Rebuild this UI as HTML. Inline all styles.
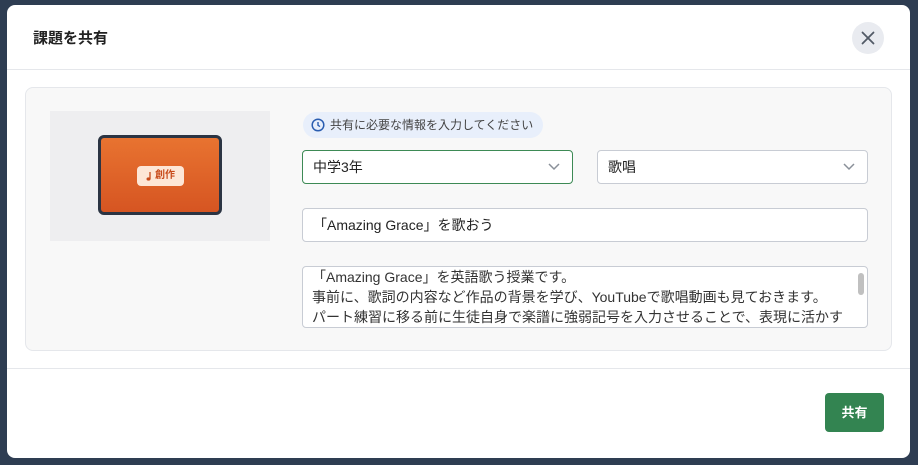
<!DOCTYPE html>
<html><head><meta charset="utf-8"><style>
*{box-sizing:border-box;margin:0;padding:0}
body{width:918px;height:465px;background:#2e3d52;font-family:"Liberation Sans","Noto Sans CJK JP",sans-serif;position:relative;overflow:hidden;color:#222}
.modal{position:absolute;left:7px;top:5px;width:903px;height:453px;background:#fff;border-radius:8px}
.title{position:absolute;left:26px;top:22px;font-size:15px;font-weight:bold;color:#222}
.close{position:absolute;left:845px;top:17px;width:32px;height:32px;border-radius:50%;background:#e9ebf0}
.hr1{position:absolute;left:0;right:0;top:64px;border-top:1px solid #e5e7eb}
.hr2{position:absolute;left:0;right:0;top:363px;border-top:1px solid #e5e7eb}
.panel{position:absolute;left:18px;top:82px;width:867px;height:264px;background:#f8f8f8;border:1px solid #e5e7eb;border-radius:8px}
.thumb{position:absolute;left:24px;top:23px;width:220px;height:130px;background:#eeeef0}
.card{position:absolute;left:48px;top:24px;width:124px;height:80px;border:3px solid #2b3443;border-radius:6px;background:linear-gradient(#e87330,#d65522)}
.tag{position:absolute;left:36px;top:28px;width:47px;height:20px;background:#fde6d6;border-radius:4px;color:#c84a1a;font-size:10px;font-weight:bold;line-height:20px;display:flex;align-items:center;justify-content:center;gap:3px}
.info{position:absolute;left:277px;top:24px;height:26px;padding:0 10px 0 8px;background:#e8effb;border-radius:13px;font-size:12px;color:#444;line-height:26px;display:flex;align-items:center;gap:5px}
.sel{position:absolute;height:34px;background:#fff;border:1px solid #c8ccd4;border-radius:4px;font-size:14px;line-height:32px;padding-left:10px}
.chev{position:absolute;right:12px;top:12px}
.ta{position:absolute;left:276px;top:178px;width:566px;height:62px;background:#fff;border:1px solid #c8ccd4;border-radius:4px;font-size:14px;line-height:20px;padding:0 20px 0 9px;overflow:hidden;white-space:nowrap;color:#333}
.sb{position:absolute;right:3px;top:6px;width:6px;height:22px;background:#c0c0c0;border-radius:3px}
.btn{position:absolute;left:818px;top:388px;width:59px;height:39px;background:#338451;border-radius:4px;color:#fff;font-size:13px;font-weight:bold;text-align:center;line-height:39px}
</style></head><body>
<div class="modal">
<div class="title">課題を共有</div>
<div class="close"><svg width="32" height="32"><path d="M10.5 10.5L21.5 21.5M21.5 10.5L10.5 21.5" stroke="#525a66" stroke-width="1.8" stroke-linecap="round"/></svg></div>
<div class="hr1"></div>
<div class="panel">
 <div class="thumb"><div class="card"><div class="tag"><svg width="6" height="10"><path d="M4 1V8" stroke="#c84a1a" stroke-width="1.3"/><ellipse cx="2.5" cy="8" rx="2" ry="1.6" fill="#c84a1a"/></svg>創作</div></div></div>
 <div class="info"><svg width="14" height="14"><circle cx="7" cy="7" r="5.8" fill="none" stroke="#2a5db0" stroke-width="1.5"/><path d="M7 4V7.3L9 8.6" fill="none" stroke="#2a5db0" stroke-width="1.4"/></svg>共有に必要な情報を入力してください</div>
 <div class="sel" style="left:276px;top:62px;width:271px;border-color:#3d8a55">中学3年<svg class="chev" width="12" height="8"><path d="M1 1L6 6L11 1" fill="none" stroke="#8a9099" stroke-width="1.5"/></svg></div>
 <div class="sel" style="left:571px;top:62px;width:271px">歌唱<svg class="chev" width="12" height="8"><path d="M1 1L6 6L11 1" fill="none" stroke="#8a9099" stroke-width="1.5"/></svg></div>
 <div class="sel" style="left:276px;top:120px;width:566px">「Amazing Grace」を歌おう</div>
 <div class="ta">「Amazing Grace」を英語歌う授業です。<br>事前に、歌詞の内容など作品の背景を学び、YouTubeで歌唱動画も見ておきます。<br>パート練習に移る前に生徒自身で楽譜に強弱記号を入力させることで、表現に活かす<div class="sb"></div></div>
</div>
<div class="hr2"></div>
<div class="btn">共有</div>
</div>
</body></html>
